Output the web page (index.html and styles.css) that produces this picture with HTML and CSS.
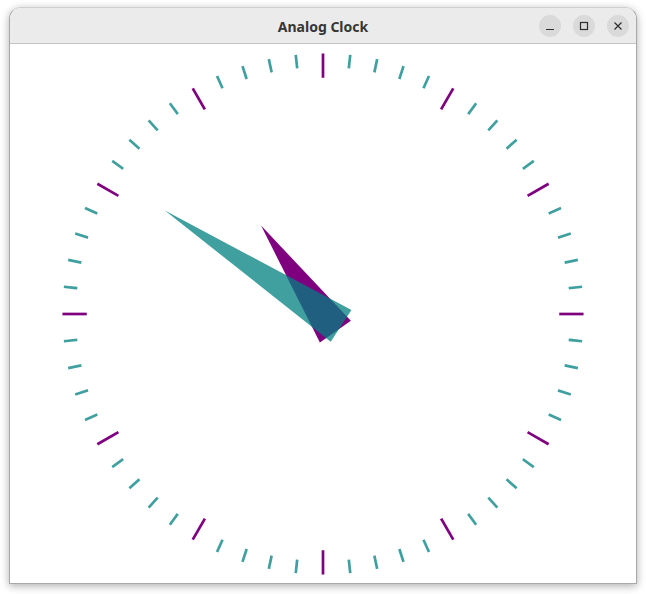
FILE: index.html
```html
<!DOCTYPE html>
<html>
<head>
<meta charset="utf-8">
<title>Analog Clock</title>
<link rel="stylesheet" href="styles.css">
</head>
<body>
<div class="window">
  <div class="titlebar">
    <div class="title">Analog Clock</div>
    <div class="controls">
      <div class="btn">
        <svg width="22" height="22" viewBox="0 0 22 22"><line x1="7" y1="14.5" x2="15" y2="14.5" class="ico"/></svg>
      </div>
      <div class="btn">
        <svg width="22" height="22" viewBox="0 0 22 22"><rect x="7.5" y="7.5" width="7" height="7" class="ico" fill="none"/></svg>
      </div>
      <div class="btn">
        <svg width="22" height="22" viewBox="0 0 22 22"><path d="M7.5 7.5 L14.5 14.5 M14.5 7.5 L7.5 14.5" class="ico"/></svg>
      </div>
    </div>
  </div>
  <div class="content">
    <svg class="clock" width="626" height="539" viewBox="0 0 626 539" id="clock">
      <g transform="translate(313 270) scale(2.7)">
        <g id="hour-hand-g" transform="rotate(325)">
          <polygon points="7,8 -7,8 0,-40" class="hour-hand"/>
        </g>
        <g id="hour-marks" class="hour-marks"></g>
        <g id="minute-hand-g" transform="rotate(303.2)">
          <polygon points="7,8 -7,8 0,-70" class="minute-hand"/>
        </g>
        <g id="minute-marks" class="minute-marks"></g>
      </g>
    </svg>
  </div>
</div>
<script src="clock.js"></script>
</body>
</html>
```
FILE: styles.css
```css
html, body {
  margin: 0;
  padding: 0;
  background: #ffffff;
}
body {
  width: 646px;
  height: 594px;
  overflow: hidden;
  padding-top: 7px;
  padding-left: 9px;
  box-sizing: border-box;
}
.window {
  width: 626px;
  border: 1px solid #a8a8a8;
  border-top-color: #cfcfcf;
  border-radius: 12px 12px 0 0;
  box-shadow: 0 2px 9px rgba(0,0,0,0.32);
  background: #ffffff;
  overflow: hidden;
}
.titlebar {
  height: 35px;
  background: #ebebeb;
  border-bottom: 1px solid #c4c4c4;
  display: flex;
  align-items: center;
  justify-content: center;
  position: relative;
}
.title {
  font-family: "Noto Sans", "DejaVu Sans", sans-serif;
  font-weight: 700;
  font-size: 14px;
  color: #363636;
  margin-top: 1px;
}
.controls {
  position: absolute;
  right: 7px;
  top: 7px;
  display: flex;
  gap: 12px;
}
.btn {
  width: 22px;
  height: 22px;
  border-radius: 50%;
  background: #dadada;
}
.btn svg { display: block; }
.ico {
  stroke: #2e2e2e;
  stroke-width: 1.2;
  fill: none;
}
.content {
  height: 539px;
  background: #ffffff;
}
.clock { display: block; }
.hour-hand { fill: rgb(127,0,127); stroke: none; }
.minute-hand { fill: rgba(0,127,127,0.749); stroke: none; }
.hour-marks line {
  stroke: rgb(127,0,127);
  stroke-width: 1;
  stroke-linecap: square;
}
.minute-marks line {
  stroke: rgba(0,127,127,0.749);
  stroke-width: 1;
  stroke-linecap: square;
}
```
FILE: clock.js
```js
(function () {
  var ns = "http://www.w3.org/2000/svg";
  var hm = document.getElementById("hour-marks");
  for (var i = 0; i < 12; i++) {
    var l = document.createElementNS(ns, "line");
    l.setAttribute("x1", 88); l.setAttribute("y1", 0);
    l.setAttribute("x2", 96); l.setAttribute("y2", 0);
    l.setAttribute("transform", "rotate(" + (i * 30) + ")");
    hm.appendChild(l);
  }
  var mm = document.getElementById("minute-marks");
  for (var j = 0; j < 60; j++) {
    if (j % 5 === 0) continue;
    var m = document.createElementNS(ns, "line");
    m.setAttribute("x1", 92); m.setAttribute("y1", 0);
    m.setAttribute("x2", 96); m.setAttribute("y2", 0);
    m.setAttribute("transform", "rotate(" + (j * 6) + ")");
    mm.appendChild(m);
  }
})();
```
